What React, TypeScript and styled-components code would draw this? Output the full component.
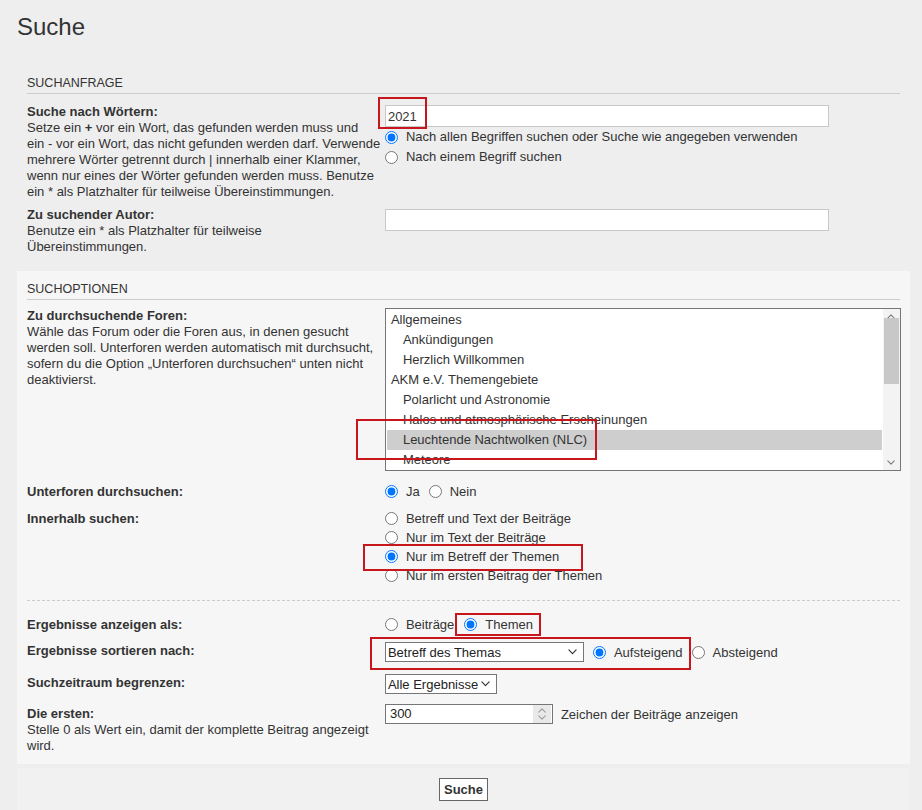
import React from "react";
import styled, { createGlobalStyle } from "styled-components";

const GlobalStyle = createGlobalStyle`
  html, body {
    margin: 0;
    padding: 0;
    background: #eeeeee;
  }
  body {
    font-family: "Liberation Sans", Arial, Helvetica, sans-serif;
    font-size: 13px;
    color: #333333;
  }
  * { box-sizing: border-box; }
`;

const Page = styled.div`
  position: relative;
  width: 922px;
  height: 810px;
  padding: 0 12px 0 17px;
  overflow: hidden;
`;

const Title = styled.h2`
  margin: 0 0 24px;
  padding-top: 13px;
  font-size: 24px;
  line-height: 28px;
  font-weight: normal;
  color: #333;
`;

const Panel = styled.div<{ $bg: string; $pb: number }>`
  background: ${(p) => p.$bg};
  padding: 8px 10px ${(p) => p.$pb}px;
  margin-bottom: 4px;
`;

const Headline = styled.h3<{ $mb: number }>`
  margin: 0 0 ${(p) => p.$mb}px;
  font-size: 12.5px;
  line-height: 20px;
  font-weight: normal;
  text-transform: uppercase;
  border-bottom: 1px solid #cccccc;
`;

const Row = styled.div<{ $mt?: number }>`
  display: flex;
  align-items: flex-start;
  margin-top: ${(p) => p.$mt ?? 0}px;
`;

const Dt = styled.div<{ $pt?: number }>`
  width: 40%;
  flex: none;
  line-height: 16px;
  padding-top: ${(p) => p.$pt ?? 0}px;
`;

const Label = styled.div`
  font-weight: bold;
`;

const Line = styled.span`
  display: block;
  white-space: nowrap;
`;

const Dd = styled.div`
  flex: 1;
  margin-left: 1%;
  min-width: 0;
`;

const TextInput = styled.input<{ $mt?: number }>`
  display: block;
  width: 444px;
  height: 22px;
  margin: ${(p) => p.$mt ?? 0}px 0 0;
  padding: 0 2px;
  border: 1px solid #c8c8c8;
  background: #fff;
  font-family: inherit;
  font-size: 13px;
  color: #333;
  outline: none;
`;

const OptionLines = styled.div<{ $lh: number }>`
  line-height: ${(p) => p.$lh}px;
`;

const RadioLabel = styled.label`
  display: flex;
  align-items: center;
  gap: 8px;
  white-space: nowrap;
`;

const InlineRadios = styled.div<{ $gap: number }>`
  display: flex;
  align-items: center;
  gap: ${(p) => p.$gap}px;
  line-height: 19px;
`;

const Radio = styled.input.attrs({ type: "radio" })`
  width: 13px;
  height: 13px;
  margin: 0;
  flex: none;
  accent-color: #0075ff;
`;

const ListBox = styled.div`
  display: flex;
  width: 516px;
  height: 163px;
  border: 1px solid #767676;
  background: #fff;
`;

const ListOptions = styled.div`
  flex: 1;
  padding: 1px 1px 0 1px;
  overflow: hidden;
`;

const ListOption = styled.div<{ $indent: boolean; $selected: boolean }>`
  height: 20px;
  line-height: 20px;
  padding-left: ${(p) => (p.$indent ? 16 : 4)}px;
  background: ${(p) => (p.$selected ? "#cecece" : "transparent")};
  white-space: nowrap;
  color: #333;
`;

const ScrollBar = styled.div`
  width: 17px;
  flex: none;
  display: flex;
  flex-direction: column;
  align-items: center;
  background: #f3f3f3;
`;

const ScrollArrow = styled.div`
  height: 15px;
  width: 100%;
  display: flex;
  align-items: center;
  justify-content: center;
  flex: none;
`;

const ScrollTrack = styled.div`
  flex: 1;
  width: 100%;
  padding: 0 1px;
`;

const ScrollThumb = styled.div`
  height: 66px;
  margin-top: -6px;
  background: #c8c8c8;
`;

const Separator = styled.hr`
  border: 0;
  border-top: 1px dashed #cccccc;
  margin: 15px 0 14px;
  height: 0;
`;

const SelectBox = styled.div<{ $w: number }>`
  display: flex;
  align-items: center;
  justify-content: space-between;
  width: ${(p) => p.$w}px;
  height: 20px;
  padding: 0 6px 0 2px;
  border: 1px solid #767676;
  background: #fff;
  color: #222;
  white-space: nowrap;
  flex: none;
`;

const SortLine = styled.div`
  display: flex;
  align-items: center;
  gap: 9px;
`;

const NumberLine = styled.div`
  display: flex;
  align-items: center;
  gap: 8px;
`;

const NumberBox = styled.div`
  display: flex;
  align-items: stretch;
  width: 168px;
  height: 20px;
  border: 1px solid #767676;
  background: #fff;
`;

const NumberValue = styled.div`
  flex: 1;
  padding-left: 4px;
  line-height: 18px;
  color: #222;
`;

const Spinner = styled.div`
  width: 18px;
  margin: 0 1px 0 0;
  background: #e9e9e9;
  display: flex;
  flex-direction: column;
  align-items: center;
  justify-content: center;
  gap: 2px;
`;

const SubmitPanel = styled.div`
  background: #f1f1f1;
  padding: 10px 10px 20px;
  display: flex;
  justify-content: center;
`;

const SubmitButton = styled.button`
  height: 23px;
  padding: 0 4px;
  border: 1px solid #666;
  background: #fff;
  font-family: inherit;
  font-size: 13px;
  font-weight: bold;
  color: #333;
`;

const Mark = styled.div`
  position: absolute;
  border: 2px solid #c8161d;
  pointer-events: none;
`;

const Chevron = ({ up = false, color = "#333", w = 9 }: { up?: boolean; color?: string; w?: number }) => (
  <svg width={w} height={w / 2 + 1} viewBox="0 0 10 6" fill="none">
    <path
      d={up ? "M1 5 L5 1 L9 5" : "M1 1 L5 5 L9 1"}
      stroke={color}
      strokeWidth="1.3"
      strokeLinecap="round"
      strokeLinejoin="round"
    />
  </svg>
);

const forums = [
  { name: "Allgemeines", indent: false },
  { name: "Ankündigungen", indent: true },
  { name: "Herzlich Willkommen", indent: true },
  { name: "AKM e.V. Themengebiete", indent: false },
  { name: "Polarlicht und Astronomie", indent: true },
  { name: "Halos und atmosphärische Erscheinungen", indent: true },
  { name: "Leuchtende Nachtwolken (NLC)", indent: true, selected: true },
  { name: "Meteore", indent: true },
  { name: "Regenbögen", indent: true },
];

const marks = [
  { x: 378, y: 97, w: 49, h: 32 },
  { x: 356, y: 419, w: 241, h: 41 },
  { x: 363, y: 544, w: 220, h: 27 },
  { x: 455, y: 613, w: 86, h: 23 },
  { x: 370, y: 637, w: 321, h: 33 },
];

export default function App() {
  return (
    <>
      <GlobalStyle />
      <Page>
        <Title>Suche</Title>

        <Panel $bg="#eeeeee" $pb={12}>
          <Headline $mb={10}>Suchanfrage</Headline>
          <Row>
            <Dt>
              <Label>Suche nach Wörtern:</Label>
              <Line>
                Setze ein <b>+</b> vor ein Wort, das gefunden werden muss und
              </Line>
              <Line>ein - vor ein Wort, das nicht gefunden werden darf. Verwende</Line>
              <Line>mehrere Wörter getrennt durch | innerhalb einer Klammer,</Line>
              <Line>wenn nur eines der Wörter gefunden werden muss. Benutze</Line>
              <Line>ein * als Platzhalter für teilweise Übereinstimmungen.</Line>
            </Dt>
            <Dd>
              <TextInput $mt={1} defaultValue="2021" />
              <OptionLines $lh={20}>
                <RadioLabel>
                  <Radio name="terms" defaultChecked />
                  Nach allen Begriffen suchen oder Suche wie angegeben verwenden
                </RadioLabel>
                <RadioLabel>
                  <Radio name="terms" />
                  Nach einem Begriff suchen
                </RadioLabel>
              </OptionLines>
            </Dd>
          </Row>
          <Row $mt={7}>
            <Dt>
              <Label>Zu suchender Autor:</Label>
              Benutze ein * als Platzhalter für teilweise Übereinstimmungen.
            </Dt>
            <Dd>
              <TextInput $mt={2} />
            </Dd>
          </Row>
        </Panel>

        <Panel $bg="#f6f6f6" $pb={10}>
          <Headline $mb={8}>Suchoptionen</Headline>
          <Row>
            <Dt>
              <Label>Zu durchsuchende Foren:</Label>
              Wähle das Forum oder die Foren aus, in denen gesucht werden soll. Unterforen werden automatisch mit
              durchsucht, sofern du die Option „Unterforen durchsuchen“ unten nicht deaktivierst.
            </Dt>
            <Dd>
              <ListBox>
                <ListOptions>
                  {forums.map((f) => (
                    <ListOption key={f.name} $indent={f.indent} $selected={!!f.selected}>
                      {f.name}
                    </ListOption>
                  ))}
                </ListOptions>
                <ScrollBar>
                  <ScrollArrow>
                    <Chevron up color="#777" w={8} />
                  </ScrollArrow>
                  <ScrollTrack>
                    <ScrollThumb />
                  </ScrollTrack>
                  <ScrollArrow>
                    <Chevron color="#777" w={8} />
                  </ScrollArrow>
                </ScrollBar>
              </ListBox>
            </Dd>
          </Row>
          <Row $mt={11}>
            <Dt $pt={2}>
              <Label>Unterforen durchsuchen:</Label>
            </Dt>
            <Dd>
              <InlineRadios $gap={9}>
                <RadioLabel>
                  <Radio name="sub" defaultChecked />
                  Ja
                </RadioLabel>
                <RadioLabel>
                  <Radio name="sub" />
                  Nein
                </RadioLabel>
              </InlineRadios>
            </Dd>
          </Row>
          <Row $mt={8}>
            <Dt $pt={2}>
              <Label>Innerhalb suchen:</Label>
            </Dt>
            <Dd>
              <OptionLines $lh={19}>
                <RadioLabel>
                  <Radio name="fields" />
                  Betreff und Text der Beiträge
                </RadioLabel>
                <RadioLabel>
                  <Radio name="fields" />
                  Nur im Text der Beiträge
                </RadioLabel>
                <RadioLabel>
                  <Radio name="fields" defaultChecked />
                  Nur im Betreff der Themen
                </RadioLabel>
                <RadioLabel>
                  <Radio name="fields" />
                  Nur im ersten Beitrag der Themen
                </RadioLabel>
              </OptionLines>
            </Dd>
          </Row>

          <Separator />

          <Row>
            <Dt $pt={2}>
              <Label>Ergebnisse anzeigen als:</Label>
            </Dt>
            <Dd>
              <InlineRadios $gap={10}>
                <RadioLabel>
                  <Radio name="show" />
                  Beiträge
                </RadioLabel>
                <RadioLabel>
                  <Radio name="show" defaultChecked />
                  Themen
                </RadioLabel>
              </InlineRadios>
            </Dd>
          </Row>
          <Row $mt={8}>
            <Dt $pt={1}>
              <Label>Ergebnisse sortieren nach:</Label>
            </Dt>
            <Dd>
              <SortLine>
                <SelectBox $w={199}>
                  Betreff des Themas
                  <Chevron />
                </SelectBox>
                <RadioLabel>
                  <Radio name="dir" defaultChecked />
                  Aufsteigend
                </RadioLabel>
                <RadioLabel>
                  <Radio name="dir" />
                  Absteigend
                </RadioLabel>
              </SortLine>
            </Dd>
          </Row>
          <Row $mt={12}>
            <Dt $pt={1}>
              <Label>Suchzeitraum begrenzen:</Label>
            </Dt>
            <Dd>
              <SelectBox $w={112}>
                Alle Ergebnisse
                <Chevron />
              </SelectBox>
            </Dd>
          </Row>
          <Row $mt={10}>
            <Dt $pt={2}>
              <Label>Die ersten:</Label>
              Stelle 0 als Wert ein, damit der komplette Beitrag angezeigt wird.
            </Dt>
            <Dd>
              <NumberLine>
                <NumberBox>
                  <NumberValue>300</NumberValue>
                  <Spinner>
                    <Chevron up color="#9a9a9a" w={8} />
                    <Chevron color="#9a9a9a" w={8} />
                  </Spinner>
                </NumberBox>
                Zeichen der Beiträge anzeigen
              </NumberLine>
            </Dd>
          </Row>
        </Panel>

        <SubmitPanel>
          <SubmitButton type="button">Suche</SubmitButton>
        </SubmitPanel>

        {marks.map((m, i) => (
          <Mark key={i} style={{ left: m.x, top: m.y, width: m.w, height: m.h }} />
        ))}
      </Page>
    </>
  );
}
